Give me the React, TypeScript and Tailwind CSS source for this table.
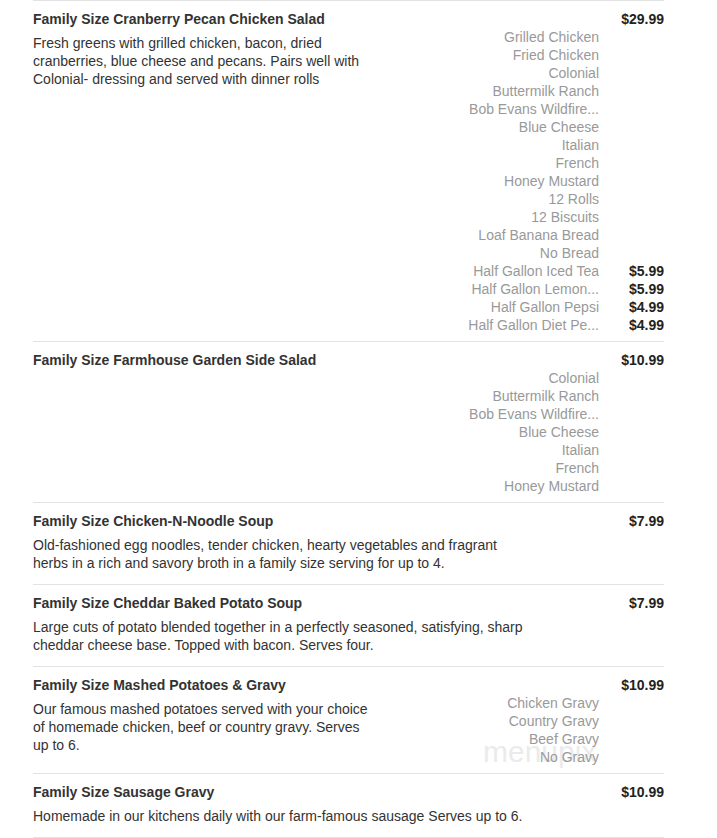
import React from "react";

type Opt = { name: string; price?: string };
type Item = { title: string; price: string; desc?: string; descW?: string; options: Opt[]; watermark?: boolean };

const items: Item[] = [
  {
    title: "Family Size Cranberry Pecan Chicken Salad",
    price: "$29.99",
    desc: "Fresh greens with grilled chicken, bacon, dried cranberries, blue cheese and pecans. Pairs well with Colonial- dressing and served with dinner rolls",
    descW: "max-w-[345px]",
    options: [
      { name: "Grilled Chicken" },
      { name: "Fried Chicken" },
      { name: "Colonial" },
      { name: "Buttermilk Ranch" },
      { name: "Bob Evans Wildfire..." },
      { name: "Blue Cheese" },
      { name: "Italian" },
      { name: "French" },
      { name: "Honey Mustard" },
      { name: "12 Rolls" },
      { name: "12 Biscuits" },
      { name: "Loaf Banana Bread" },
      { name: "No Bread" },
      { name: "Half Gallon Iced Tea", price: "$5.99" },
      { name: "Half Gallon Lemon...", price: "$5.99" },
      { name: "Half Gallon Pepsi", price: "$4.99" },
      { name: "Half Gallon Diet Pe...", price: "$4.99" },
    ],
  },
  {
    title: "Family Size Farmhouse Garden Side Salad",
    price: "$10.99",
    options: [
      { name: "Colonial" },
      { name: "Buttermilk Ranch" },
      { name: "Bob Evans Wildfire..." },
      { name: "Blue Cheese" },
      { name: "Italian" },
      { name: "French" },
      { name: "Honey Mustard" },
    ],
  },
  {
    title: "Family Size Chicken-N-Noodle Soup",
    price: "$7.99",
    desc: "Old-fashioned egg noodles, tender chicken, hearty vegetables and fragrant herbs in a rich and savory broth in a family size serving for up to 4.",
    descW: "max-w-[500px]",
    options: [],
  },
  {
    title: "Family Size Cheddar Baked Potato Soup",
    price: "$7.99",
    desc: "Large cuts of potato blended together in a perfectly seasoned, satisfying, sharp cheddar cheese base. Topped with bacon. Serves four.",
    descW: "max-w-[500px]",
    options: [],
  },
  {
    title: "Family Size Mashed Potatoes & Gravy",
    price: "$10.99",
    desc: "Our famous mashed potatoes served with your choice of homemade chicken, beef or country gravy. Serves up to 6.",
    descW: "max-w-[345px]",
    options: [
      { name: "Chicken Gravy" },
      { name: "Country Gravy" },
      { name: "Beef Gravy" },
      { name: "No Gravy" },
    ],
    watermark: true,
  },
  {
    title: "Family Size Sausage Gravy",
    price: "$10.99",
    desc: "Homemade in our kitchens daily with our farm-famous sausage Serves up to 6.",
    descW: "max-w-[500px]",
    options: [],
  },
];

function MenuItem({ item }: { item: Item }) {
  const hasOpts = item.options.length > 0;
  return (
    <div className="relative border-b border-[#e3e3e3] pt-[9px] pb-[7px]">
      {item.watermark && (
        <div className="pointer-events-none absolute left-[450px] top-[70px] text-[30px] font-light leading-[30px] text-[#ebebeb]">
          menupix
        </div>
      )}
      <div className="relative flex">
        <div className="min-w-0 flex-1">
          <div className="h-[18px] font-bold text-[#333]">{item.title}</div>
          {item.desc && (
            <p className={`mt-[6px] mb-[5px] text-[#333] ${item.descW}`}>{item.desc}</p>
          )}
        </div>
        <div className={hasOpts ? "w-[200px] shrink-0" : "shrink-0"}>
          <div className="flex h-[18px] justify-end font-bold text-[#222]">{item.price}</div>
          {item.options.map((o, i) => (
            <div key={i} className="flex h-[18px]">
              <div className="w-[135px] truncate text-right text-[#999]">{o.name}</div>
              <div className="flex-1 text-right font-bold text-[#222]">{o.price ?? ""}</div>
            </div>
          ))}
        </div>
      </div>
    </div>
  );
}

export default function App() {
  return (
    <div
      className="min-h-[838px] w-[717px] bg-white text-[14px] leading-[18px]"
      style={{ fontFamily: '"Liberation Sans", Arial, sans-serif' }}
    >
      <div className="ml-[33px] w-[631px] border-t border-[#e3e3e3]">
        {items.map((it, i) => (
          <MenuItem key={i} item={it} />
        ))}
      </div>
    </div>
  );
}
